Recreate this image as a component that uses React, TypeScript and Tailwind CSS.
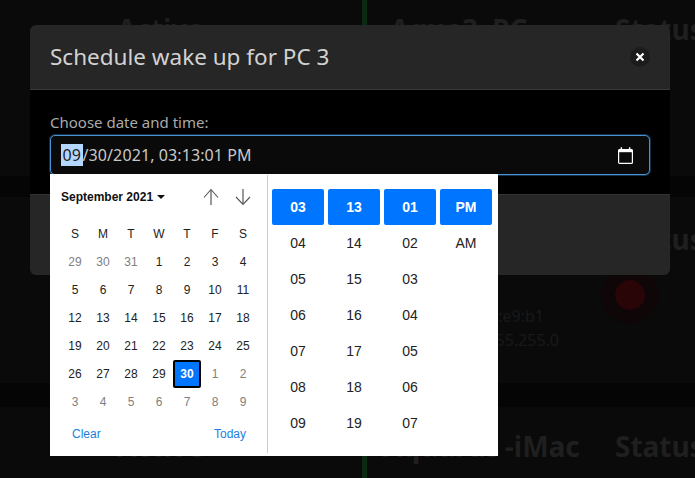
const weeks = [
  ['29', '30', '31', '1', '2', '3', '4'],
  ['5', '6', '7', '8', '9', '10', '11'],
  ['12', '13', '14', '15', '16', '17', '18'],
  ['19', '20', '21', '22', '23', '24', '25'],
  ['26', '27', '28', '29', '30', '1', '2'],
  ['3', '4', '5', '6', '7', '8', '9'],
]

const timeColumns = [
  ['03', '04', '05', '06', '07', '08', '09'],
  ['13', '14', '15', '16', '17', '18', '19'],
  ['01', '02', '03', '04', '05', '06', '07'],
  ['PM', 'AM'],
]

function BackgroundRows() {
  return (
    <div className="flex h-[478px] flex-col overflow-hidden bg-[#050505] text-[28px] font-bold leading-[40px] text-[#1f1f1f]">
      <div className="grid h-[176px] shrink-0 grid-cols-[362px_5px_1fr] bg-[#0a0a0a]">
        <div className="pl-[117px] pt-[9px]">Active</div>
        <div className="bg-[#0a2a12]" />
        <div className="grid grid-cols-[248px_1fr] pl-[23px] pt-[9px]">
          <span>
            Aqua3<span className="mx-[2.5px]">-</span>PC
          </span>
          <span className="-ml-[23px]">Status</span>
        </div>
      </div>
      <div className="mt-[21px] grid h-[186px] shrink-0 grid-cols-[362px_5px_1fr] bg-[#0a0a0a]">
        <div />
        <div className="bg-[#0a2a12]" />
        <div className="grid grid-cols-[234px_1fr] pt-[22px]">
          <div className="flex flex-col items-end pr-[42px] pt-[85px] text-base font-normal leading-[24px] text-[#191919]">
            <span className="pr-[15px]">a4:83:e7:1d:e9:b1</span>
            <span>255.255.255.0</span>
          </div>
          <div className="pl-[14px]">
            <div>Status</div>
            <div className="-ml-[14px] mt-[7px] flex h-[58px] w-[58px] items-center justify-center rounded-full bg-[#0e0607]">
              <div className="h-[30px] w-[30px] rounded-full bg-[#2a0508]" />
            </div>
          </div>
        </div>
      </div>
      <div className="mt-[24px] grid grow grid-cols-[362px_5px_1fr] bg-[#0a0a0a]">
        <div className="pl-[117px] pt-[19px]">Active</div>
        <div className="bg-[#0a2a12]" />
        <div className="grid grid-cols-[248px_1fr] pl-[16px] pt-[19px]">
          <span>
            Aquarus<span className="ml-[5px]">-</span>iMac
          </span>
          <span className="-ml-[16px]">Status</span>
        </div>
      </div>
    </div>
  )
}

function CalendarIcon() {
  return (
    <svg width="15" height="17" viewBox="0 0 15 17" fill="none" className="text-white">
      <rect x="0.6" y="2.6" width="13.8" height="13.8" rx="1" stroke="currentColor" strokeWidth="1.2" />
      <rect x="0.6" y="2.6" width="13.8" height="2.6" fill="currentColor" />
      <rect x="2.6" y="0.3" width="1.5" height="3" fill="currentColor" />
      <rect x="10.9" y="0.3" width="1.5" height="3" fill="currentColor" />
    </svg>
  )
}

function MonthArrow({ down }: { down?: boolean }) {
  return (
    <svg width="16" height="18" viewBox="0 0 16 18" fill="none" stroke="#555" strokeWidth="1.1">
      {down ? (
        <>
          <path d="M8 1V16" strokeWidth="1.5" stroke="#777" />
          <path d="M1 9L8 16.5L15 9" />
        </>
      ) : (
        <>
          <path d="M8 2V17" strokeWidth="1.5" stroke="#777" />
          <path d="M1 9.5L8 1.5L15 9.5" />
        </>
      )}
    </svg>
  )
}

function DatePopup() {
  return (
    <div className="absolute left-[50px] top-[174px] flex h-[282px] w-[448px] bg-white font-['Liberation_Sans',sans-serif] text-black">
      <div className="my-[1px] mb-[3px] flex w-[218px] flex-col border-r border-[#cccccc] pl-[11px]">
        <div className="flex h-[43px] items-center justify-between pr-[16px] pt-[1px]">
          <span className="flex items-center gap-[4px] text-[12px] font-bold text-[#111]">
            September 2021
            <span className="h-0 w-0 border-x-[4px] border-t-[4px] border-x-transparent border-t-[#111]" />
          </span>
          <span className="flex gap-[16px]">
            <MonthArrow />
            <MonthArrow down />
          </span>
        </div>
        <div className="grid w-[196px] grid-cols-7 pt-[2px] text-[12px] leading-[28px]">
          {['S', 'M', 'T', 'W', 'T', 'F', 'S'].map((d, i) => (
            <span key={i} className="h-[28px] text-center text-[#222]">
              {d}
            </span>
          ))}
          {weeks.map((week, w) =>
            week.map((day, i) => {
              const muted = (w === 0 && i < 3) || (w === 4 && i > 4) || w === 5
              const selected = w === 4 && i === 4
              return (
                <span
                  key={`${w}-${i}`}
                  className={
                    selected
                      ? 'h-[28px] rounded-[2px] border-2 border-black bg-[#0075ff] text-center font-bold leading-[24px] text-white'
                      : muted
                        ? 'h-[28px] text-center text-[#808080]'
                        : 'h-[28px] text-center text-[#222]'
                  }
                >
                  {day}
                </span>
              )
            }),
          )}
        </div>
        <div className="flex justify-between pl-[11px] pr-[21px] pt-[4px] text-[12px] leading-[28px] text-[#1b7fdc]">
          <span>Clear</span>
          <span>Today</span>
        </div>
      </div>
      <div className="flex gap-[4px] pl-[4px] pt-[15px] text-[14px]">
        {timeColumns.map((col, c) => (
          <div key={c} className="flex w-[52px] flex-col">
            {col.map((value, i) => (
              <span
                key={value}
                className={
                  i === 0
                    ? 'h-[36px] rounded-[2px] bg-[#0075ff] text-center font-bold leading-[36px] text-white'
                    : 'h-[36px] text-center leading-[36px] text-[#222]'
                }
              >
                {value}
              </span>
            ))}
          </div>
        ))}
      </div>
    </div>
  )
}

function ScheduleModal() {
  return (
    <div className="absolute left-[30px] top-[25px] flex h-[250px] w-[640px] flex-col rounded-[6px] font-['Noto_Sans',sans-serif]">
      <div className="flex h-[65px] shrink-0 items-center justify-between rounded-t-[6px] border-b border-[#3a3a3a] bg-[#262626] pl-[20px] pr-[20px]">
        <h2 className="text-[22.5px] font-normal text-[#d2d2d2]">Schedule wake up for PC 3</h2>
        <button className="flex h-[20px] w-[20px] items-center justify-center rounded-full bg-[#1c1c1c]">
          <svg width="10" height="10" viewBox="0 0 10 10" fill="none" stroke="#fff" strokeWidth="2.2">
            <path d="M1.5 1.5L8.5 8.5M8.5 1.5L1.5 8.5" />
          </svg>
        </button>
      </div>
      <div className="h-[104px] shrink-0 bg-black px-[20px] pt-[20px]">
        <label className="block text-[15px] leading-[24px] text-[#ababab]">Choose date and time:</label>
        <div className="mt-[1px] flex h-[40px] items-center justify-between rounded-[5px] border border-[#4a90d0] bg-[#0a0a0a] pl-[10px] pr-[16px] text-base tracking-[0.1px] text-[#c8c8c8] shadow-[0_0_0_1px_#17324d]">
          <span>
            <span className="bg-[#b3d7ff] px-[1.5px] text-[#222]">09</span>/30/2021, 03:13:01 PM
          </span>
          <CalendarIcon />
        </div>
      </div>
      <div className="grow rounded-b-[6px] border-t border-[#333] bg-[#262626]" />
    </div>
  )
}

export default function App() {
  return (
    <div className="relative h-[478px] w-[695px] overflow-hidden font-['Noto_Sans',sans-serif]">
      <BackgroundRows />
      <ScheduleModal />
      <DatePopup />
    </div>
  )
}
